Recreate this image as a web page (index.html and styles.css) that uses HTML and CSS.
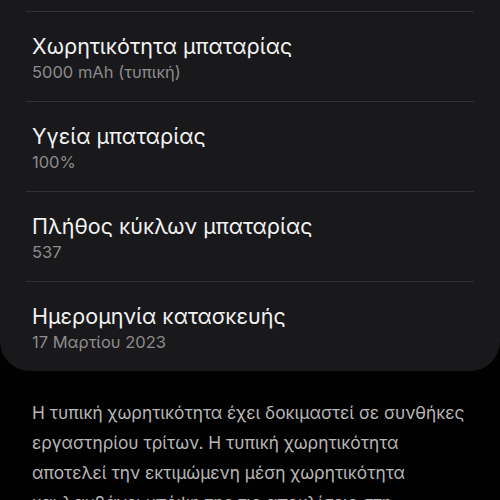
FILE: index.html
```html
<!DOCTYPE html>
<html lang="el">
<head>
<meta charset="utf-8">
<link rel="stylesheet" href="styles.css">
</head>
<body>
<div class="card">
  <div class="row">
    <div class="title">Χωρητικότητα μπαταρίας</div>
    <div class="sub">5000 mAh (τυπική)</div>
  </div>
  <div class="row">
    <div class="title">Υγεία μπαταρίας</div>
    <div class="sub">100%</div>
  </div>
  <div class="row">
    <div class="title">Πλήθος κύκλων μπαταρίας</div>
    <div class="sub">537</div>
  </div>
  <div class="row">
    <div class="title">Ημερομηνία κατασκευής</div>
    <div class="sub">17 Μαρτίου 2023</div>
  </div>
</div>
<p class="note">Η τυπική χωρητικότητα έχει δοκιμαστεί σε συνθήκες εργαστηρίου τρίτων. Η τυπική χωρητικότητα αποτελεί την εκτιμώμενη μέση χωρητικότητα και&nbsp;λαμβάνει υπόψη της τις αποκλίσεις στη χωρητικότητα της μπαταρίας.</p>
</body>
</html>
```
FILE: styles.css
```css
html, body {
  margin: 0;
  padding: 0;
  background: #010101;
}
body {
  width: 500px;
  height: 500px;
  overflow: hidden;
  font-family: Inter, "Noto Sans", sans-serif;
}
.card {
  background: #19181b;
  border-radius: 0 0 30px 30px;
  padding-top: 11px;
}
.row {
  margin: 0 26px;
  border-top: 1px solid #323134;
  padding: 20px 6px 18px;
}
.title {
  color: #f2f2f2;
  font-size: 21.5px;
  line-height: 28px;
}
.sub {
  margin-top: 1px;
  color: #8c8c8c;
  font-size: 16.5px;
  line-height: 22px;
}
.note {
  margin: 27px 0 0;
  padding: 0 28px 0 32px;
  color: #b8b8b8;
  font-size: 17.3px;
  line-height: 30px;
}
```
